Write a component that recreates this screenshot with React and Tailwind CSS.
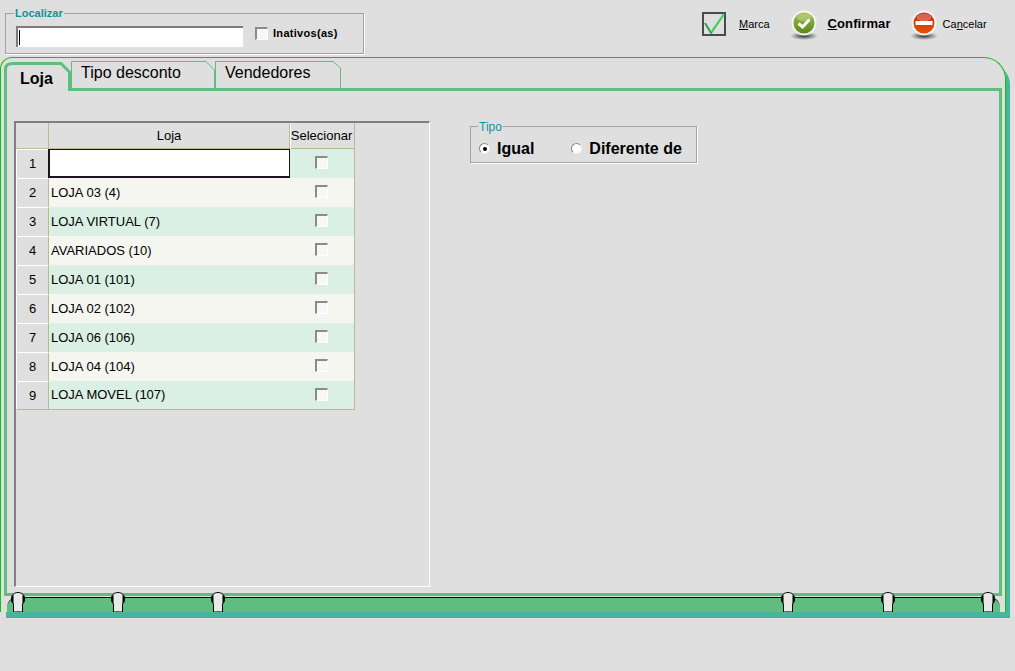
import React from 'react';

const lojas = ['', 'LOJA 03 (4)', 'LOJA VIRTUAL (7)', 'AVARIADOS (10)', 'LOJA 01 (101)', 'LOJA 02 (102)', 'LOJA 06 (106)', 'LOJA 04 (104)', 'LOJA MOVEL (107)'];

const notches = ['left-[4px]', 'left-[104px]', 'left-[204px]', 'left-[774px]', 'left-[874px]', 'left-[974px]'];

function Checkbox({ className = '' }) {
  return <span className={`block w-[13px] h-[13px] bg-[#f7f7f7] border-t-2 border-l-2 border-t-[#8a8a8a] border-l-[#8a8a8a] border-r border-b border-r-white border-b-white ${className}`} />;
}

function GroupLabel({ children, className = '' }) {
  return <span className={`absolute px-[1px] bg-[#dfdfdf] text-[#12939b] leading-[13px] ${className}`}>{children}</span>;
}

function MarcaIcon() {
  return (
    <svg width="25" height="25" viewBox="0 0 25 25" className="block">
      <rect x="1" y="1" width="22" height="22" fill="#dfdfdf" stroke="#4a4a4a" strokeWidth="2" />
      <path d="M3 11 L9 21 L22 2" fill="none" stroke="#2f9e50" strokeWidth="2" />
      <path d="M9 20 L22 2" fill="none" stroke="#4fdc62" strokeWidth="1.5" />
    </svg>
  );
}

function GlossIcon({ id, from, to, children }) {
  return (
    <svg width="30" height="30" viewBox="0 0 30 30" className="block">
      <defs>
        <linearGradient id={id} x1="0" y1="0" x2="0" y2="1">
          <stop offset="0" stopColor={from} />
          <stop offset="1" stopColor={to} />
        </linearGradient>
        <radialGradient id={id + 's'} cx="0.5" cy="0.5" r="0.5">
          <stop offset="0" stopColor="#333" />
          <stop offset="1" stopColor="#333" stopOpacity="0" />
        </radialGradient>
      </defs>
      <ellipse cx="15" cy="26" rx="14" ry="4" fill={`url(#${id}s)`} />
      <circle cx="15" cy="13" r="12.5" fill="#f4f4f4" />
      <circle cx="15" cy="13" r="10.5" fill={`url(#${id})`} />
      <ellipse cx="15" cy="7.5" rx="7.5" ry="4" fill="#fff" fillOpacity="0.25" />
      {children}
    </svg>
  );
}

function Tab({ active, width, textClass, label, path }) {
  return (
    <div className={`relative h-[31px] shrink-0 ${active ? '' : 'border-b-[3px] border-[#5fbd7f]'} ${width}`}>
      <svg className="absolute inset-0 w-full h-full" fill="none">
        <path d={path} stroke="#5fbd7f" strokeWidth={active ? 3 : 1} />
      </svg>
      <span className={`absolute text-[16px] leading-[18px] text-black ${textClass} ${active ? 'font-bold' : ''}`}>{label}</span>
    </div>
  );
}

export default function App() {
  return (
    <div className="w-[1015px] h-[671px] overflow-hidden bg-[#dfdfdf] font-['Liberation_Sans',Arial,sans-serif] text-black">
      {/* top bar */}
      <div className="flex items-start h-[57px] pt-[13px] pl-[5px]">
        <div className="relative flex items-center w-[359px] h-[41px] pl-[10px] border border-[#a3a3a3] shadow-[1px_1px_0_#fff]">
          <GroupLabel className="left-[8px] -top-[7px] text-[11px] font-bold">Localizar</GroupLabel>
          <div className="flex items-center w-[227px] h-[21px] mt-[5px] pl-[1px] bg-white border-t-2 border-l-2 border-t-[#7c7c7c] border-l-[#7c7c7c]">
            <span className="block w-px h-[15px] bg-black" />
          </div>
          <Checkbox className="ml-[12px]" />
          <span className="ml-[5px] text-[11px] font-bold tracking-[0.3px]">Inativos(as)</span>
        </div>
        <div className="flex items-start">
          <div className="ml-[338px] -mt-[1px]"><MarcaIcon /></div>
          <span className="ml-[12px] mt-[4px] text-[11px] leading-[14px]"><u>M</u>arca</span>
          <div className="ml-[19px] -mt-[3px]">
            <GlossIcon id="ok" from="#9dbb45" to="#5c8a1c">
              <path d="M9.5 13.5 L13.5 17 L20.5 9.5" fill="none" stroke="#fff" strokeWidth="3" />
            </GlossIcon>
          </div>
          <span className="ml-[9px] mt-[3px] text-[13px] leading-[16px] font-bold tracking-[0.1px]"><u>C</u>onfirmar</span>
          <div className="ml-[18px] -mt-[3px]">
            <GlossIcon id="no" from="#c42a1c" to="#ea5200">
              <rect x="6.5" y="11" width="17" height="4" fill="#fff" />
            </GlossIcon>
          </div>
          <span className="ml-[4px] mt-[4px] text-[11px] leading-[14px]">Ca<u>n</u>celar</span>
        </div>
      </div>

      {/* tab control */}
      <div className="w-[1010px] h-[561px] [clip-path:polygon(0_0,100%_0,100%_100%,6px_100%,6px_555px,0_555px)]">
        <div className="w-[1006px] h-[555px] pt-[2px] border-l border-t border-r border-[#12bf12] rounded-tl-[12px] rounded-tr-[22px] shadow-[4px_6px_0_#49b39b]">
          {/* tabs */}
          <div className="flex ml-[3px] w-[998px] h-[31px]">
            <Tab active width="w-[67px]" textClass="left-[16px] top-[10px]" label="Loja" path="M1.5 31 V9 Q1.5 3.5 9 3.5 H57 L65.5 12 V31" />
            <Tab width="w-[144px]" textClass="left-[10px] top-[4px]" label="Tipo desconto" path="M0.5 28 V1.5 H135 L143.5 10 V28" />
            <Tab width="w-[126px]" textClass="left-[10px] top-[4px]" label="Vendedores" path="M0.5 28 V1.5 H118 L125.5 8 V28" />
            <div className="flex-1 h-[31px] border-b-[3px] border-[#5fbd7f]" />
          </div>
          {/* tab body */}
          <div className="flex items-start ml-[3px] w-[998px] h-[505px] pl-[7px] pt-[30px] border-l-[3px] border-r-[3px] border-b-[3px] border-[#5fbd7f]">
            <div className="w-[416px] h-[466px] shrink-0 border-t-2 border-l-2 border-t-[#808080] border-l-[#808080] border-r border-b border-r-white border-b-white">
              <div className="grid grid-cols-[33px_241px_65px] w-[339px] text-[13px]">
                <div className="h-[26px] border-r border-b border-[#b9b998]" />
                <div className="h-[26px] flex items-center justify-center border-r border-b border-[#b9b998]">Loja</div>
                <div className="h-[26px] flex items-center justify-center pr-[2px] border-l border-r border-b border-[#b9b998] border-l-white whitespace-nowrap">Selecionar</div>
                {lojas.map((l, i) => (
                  <React.Fragment key={i}>
                    <div className={`h-[29px] flex items-center justify-center bg-[#dfdfdf] border-t border-t-white border-l border-l-white border-r border-r-[#b9b998] ${i === 8 ? 'border-b border-b-[#b9b998]' : ''}`}>{i + 1}</div>
                    {i === 0 ? (
                      <div className="h-[29px] -mx-px bg-white border-l-2 border-r-2 border-b-2 border-t border-[#1d121d]" />
                    ) : (
                      <div className={`h-[29px] flex items-center pl-[2px] whitespace-nowrap ${i % 2 === 0 ? 'bg-[#dbf0e4]' : 'bg-[#f5f6f0]'} ${i === 8 ? 'border-b border-b-[#b9b998]' : ''}`}>{l}</div>
                    )}
                    <div className={`h-[29px] flex items-center justify-center pr-[2px] border-r border-r-[#b9b998] ${i % 2 === 0 ? 'bg-[#dbf0e4]' : 'bg-[#f5f6f0]'} ${i === 8 ? 'border-b border-b-[#b9b998]' : ''}`}>
                      <Checkbox className="mb-[2px]" />
                    </div>
                  </React.Fragment>
                ))}
              </div>
            </div>
            <div className="relative flex items-center w-[227px] h-[37px] ml-[40px] mt-[5px] pt-[8px] pl-[8px] border border-[#a3a3a3] shadow-[1px_1px_0_#fff]">
              <GroupLabel className="left-[7px] -top-[6px] text-[12px]">Tipo</GroupLabel>
              <span className="flex items-center justify-center w-[11px] h-[11px] rounded-full bg-white border border-t-[#8a8a8a] border-l-[#8a8a8a] border-r-[#eee] border-b-[#eee]">
                <span className="block w-[4px] h-[4px] rounded-full bg-black" />
              </span>
              <span className="ml-[7px] text-[16px] leading-[18px] font-bold">Igual</span>
              <span className="ml-[37px] w-[11px] h-[11px] rounded-full bg-white border border-t-[#8a8a8a] border-l-[#8a8a8a] border-r-[#eee] border-b-[#eee]" />
              <span className="ml-[7px] text-[16px] leading-[18px] font-bold whitespace-nowrap">Diferente de</span>
            </div>
          </div>
          {/* bottom band */}
          <div className="relative ml-[6px] mt-px w-[993px] h-[15px] bg-[#5fbd7f] border-t border-black rounded-t-[10px]">
            {notches.map(n => (
              <svg key={n} width="14" height="20" viewBox="0 0 14 20" className={`absolute -top-[6px] ${n}`}>
                <path d="M2.5 20 V12 C1 10.5 .5 9 .5 7 C.5 3 3 .5 7 .5 C11 .5 13.5 3 13.5 7 C13.5 9 13 10.5 11.5 12 V20 Z" fill="#e8e8e8" stroke="#000" />
                <path d="M0.5 4.5 V9.5 L2.5 12 V3 Z M13.5 4.5 V9.5 L11.5 12 V3 Z" fill="#000" />
                <rect x="6.5" y="19" width="1" height="1" fill="#333" />
              </svg>
            ))}
          </div>
        </div>
        <div className="ml-[6px] w-[1004px] h-[6px] bg-[#49b39b]" />
      </div>
    </div>
  );
}
